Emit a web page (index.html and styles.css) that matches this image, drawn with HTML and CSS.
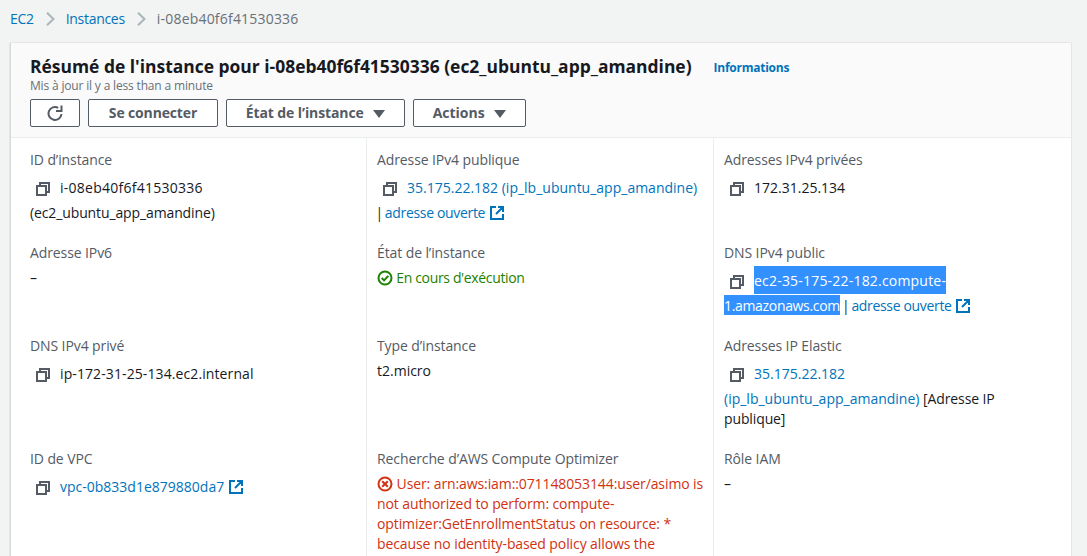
FILE: index.html
```html
<!DOCTYPE html>
<html lang="fr">
<head>
    <meta charset="UTF-8">
    <title>Résumé de l'instance</title>
    <link rel="stylesheet" href="styles.css">
</head>
<body>
    <svg class="defs" width="0" height="0">
        <symbol id="copy" viewBox="0 0 14 14"><path d="M4 4V1h9v9h-3M1 4h9v9H1z" fill="none" stroke="currentColor" stroke-width="2"/></symbol>
        <symbol id="ext" viewBox="0 0 14 14"><path d="M6 1H1v12h12V8M8 1h5v5M13 1L6 8" fill="none" stroke="currentColor" stroke-width="2"/></symbol>
    </svg>

    <nav class="crumbs">
        <a href="#">EC2</a>
        <svg class="chev" width="9" height="14" viewBox="0 0 9 14"><path d="M1 .7L7.5 7 1 13.3" fill="none" stroke="currentColor" stroke-width="2"/></svg>
        <a href="#">Instances</a>
        <svg class="chev" width="9" height="14" viewBox="0 0 9 14"><path d="M1 .7L7.5 7 1 13.3" fill="none" stroke="currentColor" stroke-width="2"/></svg>
        <span class="current">i-08eb40f6f41530336</span>
    </nav>

    <div class="card">
        <header class="card-head">
            <div class="title-row">
                <h1>Résumé de l'instance pour i-08eb40f6f41530336 (ec2_ubuntu_app_amandine)</h1>
                <a href="#" class="info">Informations</a>
            </div>
            <p class="updated">Mis à jour il y a less than a minute</p>
            <div class="actions">
                <button class="btn btn-icon" aria-label="Actualiser">
                    <svg width="16" height="16" viewBox="0 0 16 16"><path d="M14.5 9a6.5 6.5 0 1 1-3.3-6.2" fill="none" stroke="currentColor" stroke-width="2"/><path d="M14.5 .5v5.5H9" fill="none" stroke="currentColor" stroke-width="2"/></svg>
                </button>
                <button class="btn btn-connect">Se connecter</button>
                <button class="btn btn-state">État de l’instance <span class="caret"></span></button>
                <button class="btn btn-actions">Actions <span class="caret"></span></button>
            </div>
        </header>

        <div class="details">
            <div class="cell">
                <div class="label">ID d’instance</div>
                <div class="value"><span class="copy"><svg><use href="#copy"/></svg></span><span class="hex">i-08eb40f6f41530336</span> <span class="tight">(ec2_ubuntu_app_amandine)</span></div>
            </div>
            <div class="cell">
                <div class="label">Adresse IPv4 publique</div>
                <div class="value"><span class="copy"><svg><use href="#copy"/></svg></span><a href="#">35.175.22.182 (ip_lb_ubuntu_app_amandine)</a> <span class="pipe">|</span> <a href="#" class="open">adresse ouverte</a> <svg class="ext"><use href="#ext"/></svg></div>
            </div>
            <div class="cell">
                <div class="label">Adresses IPv4 privées</div>
                <div class="value"><span class="copy"><svg><use href="#copy"/></svg></span>172.31.25.134</div>
            </div>

            <div class="cell">
                <div class="label">Adresse IPv6</div>
                <div class="value">–</div>
            </div>
            <div class="cell">
                <div class="label">État de l’instance</div>
                <div class="value ok">
                    <svg class="state" width="16" height="16" viewBox="0 0 16 16"><circle cx="8" cy="8" r="6.5" fill="none" stroke="currentColor" stroke-width="2"/><path d="M4.7 8l2.4 2.4 4.2-4.6" fill="none" stroke="currentColor" stroke-width="2"/></svg>
                    En cours d'exécution
                </div>
            </div>
            <div class="cell">
                <div class="label">DNS IPv4 public</div>
                <div class="value"><span class="copy"><svg><use href="#copy"/></svg></span><span class="sel sel-first">ec2-35-175-22-182.compute-</span><span class="sel sel-second">1.amazonaws.com</span> <span class="pipe">|</span> <a href="#" class="open">adresse ouverte</a> <svg class="ext"><use href="#ext"/></svg></div>
            </div>

            <div class="cell">
                <div class="label">DNS IPv4 privé</div>
                <div class="value"><span class="copy"><svg><use href="#copy"/></svg></span><span class="dns-name">ip-172-31-25-134.ec2.internal</span></div>
            </div>
            <div class="cell">
                <div class="label">Type d’instance</div>
                <div class="value">t2.micro</div>
            </div>
            <div class="cell">
                <div class="label">Adresses IP Elastic</div>
                <div class="value"><span class="copy"><svg><use href="#copy"/></svg></span><a href="#">35.175.22.182 (ip_lb_ubuntu_app_amandine)</a> <span class="tight">[Adresse IP publique]</span></div>
            </div>

            <div class="cell">
                <div class="label">ID de VPC</div>
                <div class="value"><span class="copy"><svg><use href="#copy"/></svg></span><a href="#">vpc-0b833d1e879880da7</a> <svg class="ext"><use href="#ext"/></svg></div>
            </div>
            <div class="cell">
                <div class="label">Recherche d’AWS Compute Optimizer</div>
                <div class="value err">
                    <svg class="state" width="16" height="16" viewBox="0 0 16 16"><circle cx="8" cy="8" r="6.5" fill="none" stroke="currentColor" stroke-width="2"/><path d="M5.2 5.2l5.6 5.6M10.8 5.2l-5.6 5.6" fill="none" stroke="currentColor" stroke-width="2"/></svg>
                    User: arn:aws:iam::071148053144:user/asimo is not authorized to perform: compute-optimizer:GetEnrollmentStatus on resource: * because no identity-based policy allows the
                </div>
            </div>
            <div class="cell">
                <div class="label">Rôle IAM</div>
                <div class="value">–</div>
            </div>
        </div>
    </div>
</body>
</html>
```

FILE: styles.css
```css
html, body { height: 556px; overflow: hidden; }
body { margin: 0; background-color: #f2f3f3; font-family: "Open Sans", sans-serif; font-size: 14px; line-height: 20px; color: #16191f; }
a { color: #0073bb; text-decoration: none; }
.defs { display: block; }

.crumbs { display: flex; align-items: center; height: 38px; padding-left: 10px; margin-bottom: 5px; }
.crumbs a { letter-spacing: -0.3px; }
.chev { color: #aab7b8; margin: 0 11px 0 12px; }
.current { color: #687078; letter-spacing: 0.2px; }

.card { margin: 0 16px 0 10px; background-color: white; border-left: 1px solid #d5dbdb; box-shadow: 0 0 1px rgba(0, 22, 37, 0.3); }
.card-head { height: 95px; box-sizing: border-box; padding: 11px 19px 0; background-color: #fafafa; border-bottom: 1px solid #eaeded; }
.title-row { display: flex; align-items: center; gap: 22px; height: 24px; }
h1 { margin: 0; font-size: 17.45px; line-height: 24px; font-weight: 700; }
.info { font-size: 12px; font-weight: 700; padding-top: 3px; letter-spacing: -0.25px; }
.updated { margin: 0; font-size: 12px; line-height: 16px; color: #687078; letter-spacing: -0.17px; }
.actions { display: flex; gap: 8px; margin-top: 5px; }
.btn { height: 28px; padding: 0 0 2px; background-color: white; border: 1px solid #545b64; border-radius: 2px; color: #545b64; font-family: inherit; font-size: 14px; font-weight: 700; }
.btn-icon { width: 50px; display: flex; align-items: center; justify-content: center; padding: 0; }
.btn-connect { width: 130px; letter-spacing: -0.15px; }
.btn-state { width: 179px; letter-spacing: -0.1px; }
.btn-actions { width: 113px; }
.caret { display: inline-block; width: 0; height: 0; margin-left: 6px; border-left: 6px solid transparent; border-right: 6px solid transparent; border-top: 8px solid #545b64; }

.details { display: grid; grid-template-columns: 356px 347px 1fr; }
.cell { padding: 0 30px 20px 10px; border-right: 1px solid #eaeded; }
.cell:nth-child(-n+3) { padding-top: 12px; }
.cell:nth-child(3n) { border-right: none; }
.cell:nth-child(3n+1) { padding-left: 19px; padding-right: 10px; }
.cell:nth-child(3n+2) { padding-right: 10px; }
.label { color: #545b64; letter-spacing: -0.1px; }
.value { margin-top: 5px; }
.ok { color: #1d8102; letter-spacing: -0.35px; }
.err { color: #d13212; letter-spacing: -0.1px; margin-right: -6px; }
.hex { letter-spacing: 0.25px; }
.dns-name { letter-spacing: 0.1px; }
.tight { letter-spacing: -0.12px; }
.pipe { letter-spacing: -2px; margin-left: -1.5px; }
.open { letter-spacing: -0.33px; }

.copy { display: inline-block; vertical-align: middle; height: 14px; padding: 7px 10px 7px 6px; color: #545b64; }
.copy svg { display: block; width: 14px; height: 14px; }
.ext { width: 14px; height: 14px; margin-left: 1px; vertical-align: -2px; color: #0073bb; }
.state { vertical-align: -3px; }
.sel { background-color: #3390ff; color: white; }
.sel-first { padding: 5px 0 4px; letter-spacing: 0.2px; }
.sel-second { padding: 1px 0 0; letter-spacing: -0.33px; }
```
